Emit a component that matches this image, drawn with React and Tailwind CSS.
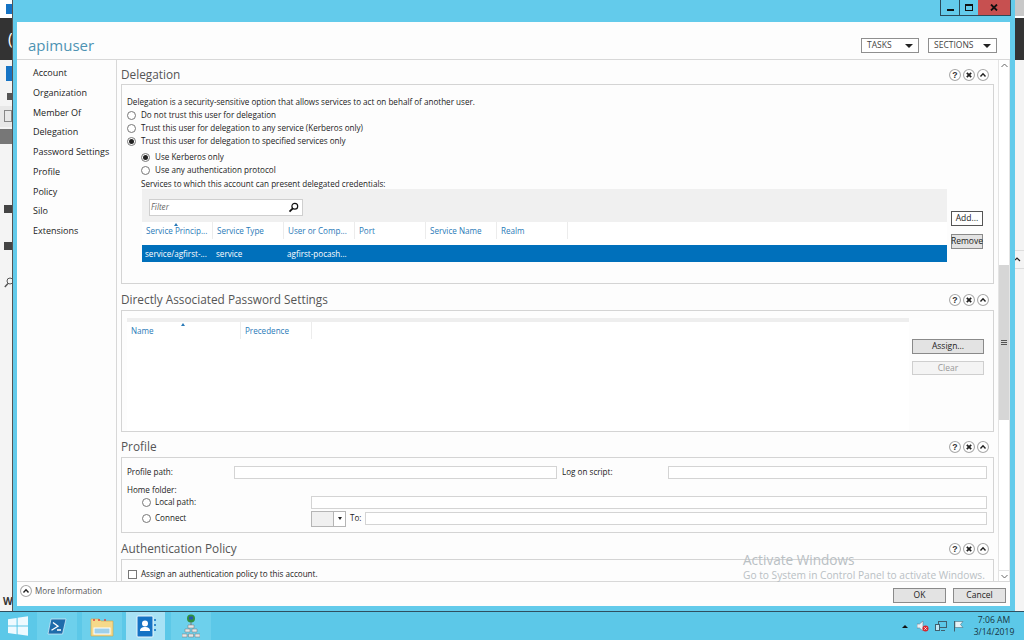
const navItems = ['Account', 'Organization', 'Member Of', 'Delegation', 'Password Settings', 'Profile', 'Policy', 'Silo', 'Extensions']
const serviceCols = ['Service Princip...', 'Service Type', 'User or Comp...', 'Port', 'Service Name', 'Realm']

function RoundIcon({ kind, size = 12 }) {
  return (
    <svg width={size} height={size} viewBox="0 0 11 11" className="shrink-0">
      <circle cx="5.5" cy="5.5" r="5" fill="#fff" stroke="#a8a8a8" />
      {kind === 'help' && <text x="5.5" y="8.4" textAnchor="middle" fontSize="8" fontWeight="700" fill="#333" fontFamily="Liberation Sans, sans-serif">?</text>}
      {kind === 'close' && <path d="M3.5 3.5l4 4M7.5 3.5l-4 4" stroke="#222" strokeWidth="1.6" />}
      {kind === 'up' && <path d="M3.2 6.8l2.3-2.4 2.3 2.4" stroke="#222" strokeWidth="1.3" fill="none" />}
    </svg>
  )
}

function SectionHead({ title, height, className = 'pt-[5px]' }) {
  return (
    <div className={`flex items-center justify-between pr-[5px] ${className}`} style={{ height }}>
      <span className="text-[11.8px] leading-none text-[#555]">{title}</span>
      <div className="flex gap-[2px]">
        <RoundIcon kind="help" />
        <RoundIcon kind="close" />
        <RoundIcon kind="up" />
      </div>
    </div>
  )
}

function Radio({ label, checked, className = '' }) {
  return (
    <div className={`flex items-center h-[13px] ${className}`}>
      <span className="flex items-center justify-center w-[9px] h-[9px] rounded-full border border-[#777] bg-white mr-[5px]">
        {checked && <span className="w-[5px] h-[5px] rounded-full bg-[#222]" />}
      </span>
      <span>{label}</span>
    </div>
  )
}

function Field({ className = '' }) {
  return <div className={`h-[13px] bg-white border border-[#d4d4d4] ${className}`} />
}

function SideButton({ label, className = '' }) {
  return (
    <div className={`flex items-center justify-center h-[15px] border border-[#8a8a8a] bg-[#e3e3e3] text-[8.5px] text-[#222] ${className}`}>
      {label}
    </div>
  )
}

function DropButton({ label, className = '' }) {
  return (
    <div className={`flex items-center justify-between h-[15px] pl-[5px] pr-[5px] border border-[#8f8f8f] bg-white text-[8.5px] text-[#444] ${className}`}>
      <span>{label}</span>
      <span className="w-0 h-0 border-x-[4px] border-x-transparent border-t-[4px] border-t-[#222]" />
    </div>
  )
}

function App() {
  return (
    <div className="relative flex flex-col w-[1024px] h-[640px] overflow-hidden bg-[#f4f4f4] text-[9px] text-[#222] font-['Open_Sans','Liberation_Sans',sans-serif]">
      {/* desktop behind the window */}
      <div className="relative flex-1 overflow-hidden">
        <div className="flex flex-col h-full">
          <div className="h-[18px] bg-white" />
          <div className="h-[42px] bg-[#333]" />
          <div className="flex-1" />
        </div>
        <div className="absolute left-[6px] top-[4px] w-[6px] h-[10px] bg-[#1573c4]" />
        <div className="absolute left-[8px] top-[29px] text-[16px] leading-[20px] text-white">(</div>
        <div className="absolute left-[6px] top-[66px] w-[6px] h-[15px] bg-[#1573c4]" />
        <div className="absolute left-[7px] top-[93px] w-[5px] h-[7px] bg-[#555]" />
        <div className="absolute left-0 top-[106px] w-[12px] h-[21px] bg-[#e8e8e8]" />
        <div className="absolute left-[4px] top-[110px] w-[8px] h-[12px] border border-[#888]" />
        <div className="absolute left-0 top-[129px] w-[12px] h-[15px] bg-[#777]" />
        <div className="absolute left-[4px] top-[205px] w-[8px] h-[8px] bg-[#444]" />
        <div className="absolute left-[4px] top-[242px] w-[8px] h-[8px] bg-[#444]" />
        <svg className="absolute left-[4px] top-[277px]" width="8" height="11" viewBox="0 0 8 11">
          <circle cx="6" cy="4" r="3" fill="none" stroke="#555" />
          <path d="M4 6.5L.8 10" stroke="#555" strokeWidth="1.4" />
        </svg>
        <div className="absolute left-[3px] top-[594px] text-[10px] font-bold text-[#333]">W</div>
        <div className="absolute left-[1015px] top-0 w-[9px] h-[16px] bg-[#c8c8c8]" />
        <div className="absolute left-[1015px] top-[22px] w-[9px] h-[38px] bg-[#333]" />
        <div className="absolute left-[1015px] top-[250px] w-[9px] h-[1px] bg-[#ddd]" />
        <div className="absolute left-[1015px] top-[268px] w-[9px] h-[1px] bg-[#ddd]" />
        <svg className="absolute left-[1015px] top-[257px]" width="6" height="6" viewBox="0 0 6 6">
          <path d="M0 3l2-2 3 3" fill="none" stroke="#222" strokeWidth="1.2" />
        </svg>

        {/* AD admin center window */}
        <div className="absolute left-[12px] top-0 flex flex-col w-[1003px] h-[611px] border-l border-[#555] bg-[#63cbeb]">
          <div className="flex justify-end h-[22px] pr-[4px]">
            <div className="flex h-[16px] border-x border-b border-[#2a4a5a]">
              <div className="flex items-end justify-center w-[19px] pb-[4px] border-r border-[#2a4a5a]">
                <span className="w-[7px] h-[2px] bg-[#111]" />
              </div>
              <div className="flex items-center justify-center w-[18px]">
                <span className="w-[8px] h-[7px] border-[1.5px] border-t-[2.5px] border-[#111]" />
              </div>
              <div className="flex items-center justify-center w-[32px] bg-[#c75050]">
                <svg width="8" height="7" viewBox="0 0 8 7">
                  <path d="M1 .5l6 6M7 .5l-6 6" stroke="#111" strokeWidth="1.8" />
                </svg>
              </div>
            </div>
          </div>

          <div className="flex flex-col h-[584px] mx-[4px] mr-[5px] bg-[#fdfdfd]">
            <div className="flex items-start justify-between h-[38px] shrink-0 pl-[11px] pr-[13px] border-b border-[#d8d8d8]">
              <span className="mt-[13px] text-[15px] leading-[20px] text-[#4d93b3]">apimuser</span>
              <div className="flex gap-[9px] mt-[16px]">
                <DropButton label="TASKS" className="w-[58px]" />
                <DropButton label="SECTIONS" className="w-[69px]" />
              </div>
            </div>

            <div className="flex flex-1 min-h-0">
              <nav className="w-[100px] shrink-0 pl-[16px] pt-[3px] border-r border-[#d8d8d8]">
                {navItems.map((item) => (
                  <div key={item} className="h-[19.75px] leading-[19.75px] whitespace-nowrap">{item}</div>
                ))}
              </nav>

              <main className="flex-1 min-w-0 overflow-hidden pl-[4px] pr-[4px] text-[8.1px]">
                <SectionHead title="Delegation" height={24} />
                <section className="h-[200px] pl-[5px] pr-[9px] pt-[10px] border border-[#d4d4d4]">
                  <div className="h-[13px] leading-[13px]">Delegation is a security-sensitive option that allows services to act on behalf of another user.</div>
                  <Radio label="Do not trust this user for delegation" className="mt-[1px]" />
                  <Radio label="Trust this user for delegation to any service (Kerberos only)" />
                  <Radio label="Trust this user for delegation to specified services only" checked />
                  <Radio label="Use Kerberos only" checked className="ml-[14px] mt-[3px]" />
                  <Radio label="Use any authentication protocol" className="ml-[14px]" />
                  <div className="h-[12px] ml-[14px] leading-[13px]">Services to which this account can present delegated credentials:</div>
                  <div className="flex ml-[15px]">
                    <div className="w-[805px]">
                      <div className="flex items-center h-[33px] pl-[7px] pt-[3px] bg-[#f0f0f0]">
                        <div className="flex items-center justify-between w-[154px] h-[17px] pl-[1px] pr-[3px] bg-white border border-[#cfcfcf]">
                          <span className="italic text-[#666]">Filter</span>
                          <svg width="11" height="11" viewBox="0 0 11 11">
                            <circle cx="6.8" cy="4.2" r="2.9" fill="none" stroke="#111" strokeWidth="1.2" />
                            <path d="M4.8 6.4L1.5 9.6" stroke="#111" strokeWidth="1.8" />
                          </svg>
                        </div>
                      </div>
                      <div className="relative flex h-[23px] bg-white text-[#2a7ab8]">
                        {serviceCols.map((col) => (
                          <div key={col} className="w-[71px] h-[17px] pl-[4px] pt-[2px] leading-[13px] border-r border-[#ececec] whitespace-nowrap">{col}</div>
                        ))}
                        <span className="absolute left-[32px] top-[1px] w-0 h-0 border-x-[2.5px] border-x-transparent border-b-[3px] border-b-[#2a7ab8]" />
                      </div>
                      <div className="flex items-center h-[17px] pt-[1px] bg-[#0070bb] text-white">
                        <span className="w-[71px] pl-[3px] whitespace-nowrap">service/agfirst-...</span>
                        <span className="w-[71px] pl-[3px]">service</span>
                        <span className="w-[71px] pl-[3px] whitespace-nowrap">agfirst-pocash...</span>
                      </div>
                    </div>
                    <div className="ml-[4px] pt-[22px] w-[32px]">
                      <div className="flex items-center justify-center h-[15px] border border-[#555] bg-white text-[8.5px]">Add...</div>
                      <SideButton label="Remove" className="mt-[8px]" />
                    </div>
                  </div>
                </section>

                <SectionHead title="Directly Associated Password Settings" height={26} className="pt-[6px]" />
                <section className="flex h-[122px] pl-[5px] pr-[9px] pt-[7px] border border-[#d4d4d4]">
                  <div className="w-[782px] border-t-[4px] border-[#eeeeee] bg-white">
                    <div className="relative flex h-[17px] text-[#2a7ab8]">
                      <div className="w-[114px] pl-[4px] pt-[2px] leading-[13px] border-r border-[#ececec]">Name</div>
                      <div className="w-[71px] pl-[4px] pt-[2px] leading-[13px] border-r border-[#ececec]">Precedence</div>
                      <span className="absolute left-[54px] top-[1px] w-0 h-0 border-x-[2.5px] border-x-transparent border-b-[3px] border-b-[#2a7ab8]" />
                    </div>
                  </div>
                  <div className="ml-[3px] pt-[21px] w-[72px]">
                    <SideButton label="Assign..." />
                    <div className="flex items-center justify-center h-[14px] mt-[7px] border border-[#cfcfcf] bg-[#f4f4f4] text-[8.5px] text-[#999]">Clear</div>
                  </div>
                </section>

                <SectionHead title="Profile" height={25} />
                <section className="h-[76px] pl-[5px] pr-[6px] pt-[8px] border border-[#d4d4d4]">
                  <div className="flex items-center h-[13px]">
                    <span className="w-[107px]">Profile path:</span>
                    <Field className="w-[323px]" />
                    <span className="w-[111px] pl-[5px]">Log on script:</span>
                    <Field className="flex-1" />
                  </div>
                  <div className="h-[13px] mt-[4px] leading-[13px]">Home folder:</div>
                  <div className="flex items-center h-[13px]">
                    <Radio label="Local path:" className="ml-[15px] w-[169px] [&>span:first-child]:mr-[4px]" />
                    <Field className="flex-1" />
                  </div>
                  <div className="flex items-center h-[13px] mt-[3px]">
                    <Radio label="Connect" className="ml-[15px] w-[169px] [&>span:first-child]:mr-[4px]" />
                    <div className="flex shrink-0 w-[35px] h-[16px] border border-[#b5b5b5]">
                      <div className="flex-1 bg-[#f0f0f0] border-r border-[#b5b5b5]" />
                      <div className="flex items-center justify-center w-[11px] bg-white">
                        <span className="w-0 h-0 border-x-[2.5px] border-x-transparent border-t-[3px] border-t-[#222]" />
                      </div>
                    </div>
                    <span className="w-[19px] pl-[4px]">To:</span>
                    <Field className="flex-1" />
                  </div>
                </section>

                <SectionHead title="Authentication Policy" height={26} />
                <section className="h-[40px] pl-[6px] pr-[6px] pt-[8px] border border-[#d4d4d4]">
                  <div className="flex items-center h-[13px]">
                    <span className="w-[9px] h-[9px] border border-[#777] bg-white mr-[4px]" />
                    <span>Assign an authentication policy to this account.</span>
                  </div>
                </section>
              </main>

              <div className="flex flex-col justify-between w-[12px] shrink-0 border-x border-[#e4e4e4] bg-white">
                <div className="flex flex-col flex-1">
                  <div className="flex items-center justify-center h-[11px]">
                    <svg width="7" height="5" viewBox="0 0 7 5"><path d="M.5 4l3-3 3 3" fill="none" stroke="#666" /></svg>
                  </div>
                  <div className="flex items-center justify-center h-[155px] mt-[194px] bg-[#d6d6d6]">
                    <span className="w-[6px] h-[5px] border-y border-[#555] relative after:absolute after:left-0 after:top-[1px] after:w-[6px] after:h-px after:bg-[#555]" />
                  </div>
                  <div className="flex-1" />
                </div>
                <div className="flex items-center justify-center h-[11px] border-t border-[#e4e4e4]">
                  <svg width="7" height="5" viewBox="0 0 7 5"><path d="M.5 1l3 3 3-3" fill="none" stroke="#666" /></svg>
                </div>
              </div>
            </div>

            <footer className="flex items-start justify-between h-[25px] shrink-0 pl-[3px] pr-[4px] border-t border-[#d8d8d8]">
              <div className="flex items-center gap-[3px] mt-[3px] text-[8.1px] text-[#555]">
                <RoundIcon kind="up" />
                <span>More Information</span>
              </div>
              <div className="flex gap-[7px] mt-[6px]">
                <SideButton label="OK" className="w-[53px]" />
                <SideButton label="Cancel" className="w-[53px]" />
              </div>
            </footer>
          </div>
        </div>

        {/* activation watermark */}
        <div className="absolute left-[743px] top-[552px] text-[#b9c0c4] pointer-events-none whitespace-nowrap">
          <div className="text-[13.6px] leading-[16px]">Activate Windows</div>
          <div className="text-[10.2px] leading-[15px]">Go to System in Control Panel to activate Windows.</div>
        </div>
      </div>

      {/* taskbar */}
      <div className="flex items-center h-[29px] border-t border-[#2f4f5f] bg-[#5cc8e8]">
        <div className="flex items-center justify-center w-[36px] h-full">
          <svg width="20" height="20" viewBox="0 0 20 20" fill="#eefaff">
            <path d="M0 3.2L8.6 2v7.6H0zM9.6 1.8L20 .3v9.3H9.6zM0 10.6h8.6v7.6L0 17zM9.6 10.6H20v9.1L9.6 18.3z" />
          </svg>
        </div>
        <div className="flex items-center justify-center w-[40px] h-full ml-[1px] bg-[#6dd0ec]">
          <svg width="20" height="17" viewBox="0 0 20 17">
            <path d="M4 1h15l-3.5 15H1z" fill="#1f6cab" stroke="#dbeefa" strokeWidth=".7" />
            <path d="M6 4.5l5 3.7-6.5 4M10 12h4" stroke="#fff" strokeWidth="1.3" fill="none" />
          </svg>
        </div>
        <div className="flex items-center justify-center w-[40px] h-full ml-[5px] bg-[#6dd0ec]">
          <svg width="24" height="21" viewBox="0 0 24 21">
            <path d="M1 3h8l2 2h12v15H1z" fill="#f5d98a" stroke="#c9a64a" strokeWidth=".6" />
            <path d="M3 4h2M8 4h2M14 4h2" stroke="#d44" strokeWidth="1.5" />
            <rect x="4" y="12" width="16" height="6" fill="#9fd0ea" stroke="#fff" />
          </svg>
        </div>
        <div className="flex items-center justify-center w-[39px] h-full ml-[4px] bg-[#a8e2f5]">
          <svg width="20" height="23" viewBox="0 0 20 23">
            <rect x="1" y="1" width="16" height="21" rx="1" fill="#1573c4" stroke="#eaf6fc" />
            <circle cx="9" cy="8.5" r="3" fill="#fff" />
            <path d="M4 16c0-3 2-4 5-4s5 1 5 4z" fill="#fff" />
            <path d="M19 4v2M19 9v2M19 14v2" stroke="#1573c4" strokeWidth="1.6" />
          </svg>
        </div>
        <div className="flex items-center justify-center w-[40px] h-full ml-[6px] bg-[#6dd0ec]">
          <svg width="18" height="25" viewBox="0 0 18 25">
            <circle cx="9" cy="4.5" r="4" fill="#2f8f3f" />
            <path d="M7 2.5h4v3H7z" fill="#2456b0" />
            <path d="M9 8v3" stroke="#777" />
            <path d="M6 11h6v3H6zM3 15h5v3H3zM10 15h5v3h-5zM0 20h5v3H0zM6.5 20h5v3h-5zM13 20h5v3h-5z" fill="#e6e6e6" stroke="#777" strokeWidth=".5" />
          </svg>
        </div>

        <div className="flex-1" />

        <div className="flex items-center gap-[6px]">
          <span className="w-0 h-0 mr-[3px] border-x-[3px] border-x-transparent border-b-[3px] border-b-[#111]" />
          <svg width="12" height="12" viewBox="0 0 12 12">
            <path d="M0 4h2.5L6 1v10L2.5 8H0z" fill="#e8f2f6" stroke="#667" strokeWidth=".5" />
            <circle cx="8.5" cy="8.5" r="3" fill="#d9262c" />
            <path d="M7.3 7.3l2.4 2.4M9.7 7.3l-2.4 2.4" stroke="#fff" strokeWidth=".8" />
          </svg>
          <svg width="12" height="12" viewBox="0 0 12 12" fill="none">
            <rect x="3.5" y="1.5" width="8" height="6" stroke="#40606e" />
            <rect x=".5" y="4.5" width="4" height="6" fill="#bfe7f5" stroke="#40606e" />
            <path d="M6 10.5h4" stroke="#40606e" />
          </svg>
          <svg width="11" height="12" viewBox="0 0 11 12">
            <path d="M1.5 1v10.5" stroke="#40606e" />
            <path d="M2 1.5h8L7.5 4.5 10 7.5H2z" fill="#e8f2f6" stroke="#40606e" strokeWidth=".5" />
          </svg>
        </div>
        <div className="w-[60px] text-center text-[8.6px] leading-[12px] text-[#17333f]">
          <div>7:06 AM</div>
          <div>3/14/2019</div>
        </div>
      </div>
    </div>
  )
}

export default App
